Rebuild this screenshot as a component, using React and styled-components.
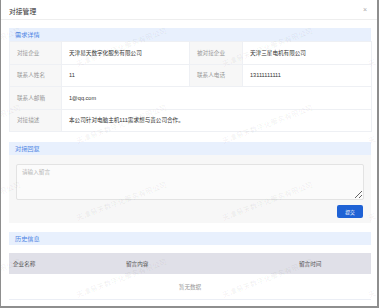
import React from 'react'
import styled, { createGlobalStyle } from 'styled-components'

const GlobalStyle = createGlobalStyle`
    html, body {
        margin: 0;
        padding: 0;
        background: #8e8e8e;
    }
    body {
        font-family: "Liberation Sans", "Noto Sans CJK SC", sans-serif;
        color: #333;
    }
`

const Dialog = styled.div`
    position: relative;
    width: 376px;
    height: 306px;
    margin-left: 1px;
    background: #fff;
    overflow: hidden;
`

const TitleBar = styled.div`
    height: 20px;
    display: flex;
    align-items: center;
    justify-content: space-between;
    padding: 0 8px;
    border-bottom: 1px solid #eeeeee;
    box-sizing: border-box;
`

const Title = styled.span`
    font-size: 6.8px;
    color: #333;
    padding-top: 3px;
`

const Close = styled.span`
    font-size: 7px;
    color: #aaa;
    margin-right: 2px;
`

const Body = styled.div`
    padding: 8px 6px 0 8px;
    display: flex;
    flex-direction: column;
`

const SectionHead = styled.div`
    height: 13px;
    display: flex;
    align-items: center;
    padding-left: 6px;
    background: #e8f0fd;
    color: #4f86e4;
    font-size: 6.2px;
    margin-top: ${({gap}) => gap || 0}px;
`

const InfoTable = styled.table`
    width: 362px;
    border-collapse: collapse;
    table-layout: fixed;
    font-size: 5.6px;
    td {
        height: 22.5px;
        padding: 0 0 0 7px;
        border: 1px solid #eef0f4;
        box-sizing: border-box;
        color: #333;
    }
    td.label {
        background: #f7f7f7;
        color: #999;
    }
`

const ReplyPanel = styled.div`
    background: #f7f7f7;
    padding: 9px 7px 5px 7px;
    display: flex;
    flex-direction: column;
    align-items: flex-end;
    gap: 5px;
`

const TextArea = styled.textarea`
    width: 100%;
    height: 36px;
    box-sizing: border-box;
    background: #fbfbfb;
    border: 1px solid #e3e3e3;
    border-radius: 2px;
    padding: 3px 5px;
    font-family: "Liberation Sans", "Noto Sans CJK SC", sans-serif;
    font-size: 5.6px;
    outline: none;
    &::placeholder {
        color: #b5b5b5;
    }
`

const Button = styled.button`
    width: 26px;
    height: 13px;
    padding: 0;
    border: none;
    border-radius: 2px;
    background: #1f62d5;
    color: #fff;
    font-family: "Liberation Sans", "Noto Sans CJK SC", sans-serif;
    font-size: 4.8px;
    margin-right: 1px;
`

const HistoryTable = styled.table`
    width: 362px;
    margin-top: 8px;
    border-collapse: collapse;
    table-layout: fixed;
    font-size: 5.6px;
    th {
        height: 21px;
        background: #e0e0e8;
        color: #555;
        font-weight: normal;
        text-align: left;
        padding: 0 0 0 4px;
    }
    td {
        height: 23px;
        text-align: center;
        color: #999;
        border-bottom: 1px solid #ebeef5;
    }
`

const Watermark = styled.div`
    position: absolute;
    left: -69px;
    top: -9px;
    display: grid;
    grid-template-columns: repeat(4, 146px);
    grid-auto-rows: 77px;
    pointer-events: none;
`

const Mark = styled.div`
    align-self: end;
    white-space: nowrap;
    font-size: 7.4px;
    line-height: 1;
    color: rgba(0, 0, 0, 0.07);
    transform-origin: left bottom;
    transform: rotate(-21deg);
`

const info = [
    ['对接企业', '天津易天数字化服务有限公司', '被对接企业', '天津三星电机有限公司'],
    ['联系人姓名', '11', '联系人电话', '13111111111'],
    ['联系人邮箱', '1@qq.com'],
    ['对接描述', '本公司针对电脑主机111需求想与贵公司合作。'],
]

const App = () => (
    <Dialog>
        <GlobalStyle />
        <TitleBar>
            <Title>对接管理</Title>
            <Close>×</Close>
        </TitleBar>
        <Body>
            <SectionHead>需求详情</SectionHead>
            <InfoTable>
                <colgroup>
                    <col style={{width: 52}} />
                    <col style={{width: 128}} />
                    <col style={{width: 53}} />
                    <col style={{width: 129}} />
                </colgroup>
                <tbody>
                    {info.map((row) => (
                        <tr key={row[0]}>
                            <td className="label">{row[0]}</td>
                            {row.length > 2 ? (
                                <>
                                    <td>{row[1]}</td>
                                    <td className="label">{row[2]}</td>
                                    <td>{row[3]}</td>
                                </>
                            ) : (
                                <td colSpan={3}>{row[1]}</td>
                            )}
                        </tr>
                    ))}
                </tbody>
            </InfoTable>
            <SectionHead gap={10}>对接回复</SectionHead>
            <ReplyPanel>
                <TextArea placeholder="请输入留言" />
                <Button>提交</Button>
            </ReplyPanel>
            <SectionHead gap={9}>历史信息</SectionHead>
            <HistoryTable>
                <colgroup>
                    <col style={{width: 113}} />
                    <col style={{width: 173}} />
                    <col style={{width: 76}} />
                </colgroup>
                <thead>
                    <tr>
                        <th>企业名称</th>
                        <th>留言内容</th>
                        <th>留言时间</th>
                    </tr>
                </thead>
                <tbody>
                    <tr>
                        <td colSpan={3}>暂无数据</td>
                    </tr>
                </tbody>
            </HistoryTable>
        </Body>
        <Watermark>
            {Array.from({length: 16}).map((_, i) => (
                <Mark key={i}>天津易天数字化服务有限公司</Mark>
            ))}
        </Watermark>
    </Dialog>
)

export default App
